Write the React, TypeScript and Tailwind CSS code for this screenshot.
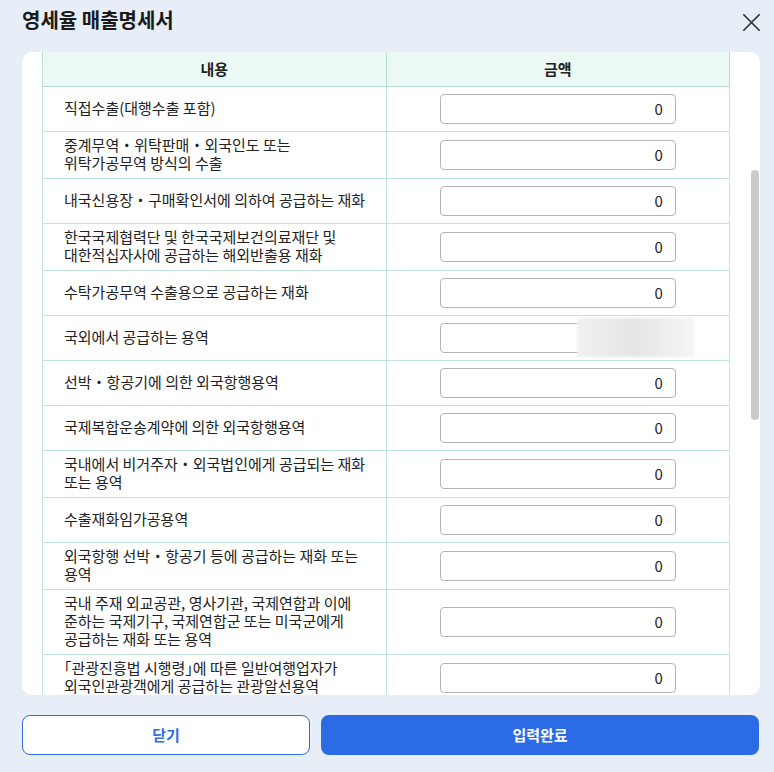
const items: string[][] = [
  ["직접수출(대행수출 포함)"],
  ["중계무역・위탁판매・외국인도 또는", "위탁가공무역 방식의 수출"],
  ["내국신용장・구매확인서에 의하여 공급하는 재화"],
  ["한국국제협력단 및 한국국제보건의료재단 및", "대한적십자사에 공급하는 해외반출용 재화"],
  ["수탁가공무역 수출용으로 공급하는 재화"],
  ["국외에서 공급하는 용역"],
  ["선박・항공기에 의한 외국항행용역"],
  ["국제복합운송계약에 의한 외국항행용역"],
  ["국내에서 비거주자・외국법인에게 공급되는 재화", "또는 용역"],
  ["수출재화임가공용역"],
  ["외국항행 선박・항공기 등에 공급하는 재화 또는", "용역"],
  [
    "국내 주재 외교공관, 영사기관, 국제연합과 이에",
    "준하는 국제기구, 국제연합군 또는 미국군에게",
    "공급하는 재화 또는 용역",
  ],
  ["「관광진흥법 시행령」에 따른 일반여행업자가", "외국인관광객에게 공급하는 관광알선용역"],
];

// 「 」 are full width in Noto CJK, use the half-width alternates like the original
function Line({ text }: { text: string }) {
  const parts = text.split(/([「」])/);
  return (
    <div>
      {parts.map((p, i) =>
        p === "「" || p === "」" ? (
          <span key={i} className="[font-feature-settings:'halt']">
            {p}
          </span>
        ) : (
          p
        )
      )}
    </div>
  );
}

function CloseIcon() {
  return (
    <svg viewBox="0 0 17 17" className="mt-[8px] h-[17px] w-[17px]" fill="none">
      <path d="M0.8 0.8L16.2 16.2M16.2 0.8L0.8 16.2" stroke="#2b2b2b" strokeWidth="1.6" strokeLinecap="round" />
    </svg>
  );
}

export default function App() {
  return (
    <div className="flex h-[772px] w-[774px] flex-col bg-[#e8eef8] pl-[22px] pr-[14px] font-['Noto_Sans_CJK_KR',sans-serif] text-[#222]">
      <header className="flex h-[52px] shrink-0 items-start justify-between pt-[6px]">
        <h2 className="text-[20px] leading-[28px] font-bold text-[#1a1a1a]">영세율 매출명세서</h2>
        <button type="button" aria-label="닫기">
          <CloseIcon />
        </button>
      </header>

      <div className="relative h-[643px] shrink-0 overflow-hidden rounded-[10px] bg-white">
        <div className="h-full overflow-y-auto pl-5 pr-[30px] [scrollbar-width:none]">
          <table className="w-full table-fixed border-collapse text-[15px] leading-[18px]">
            <thead>
              <tr className="h-[34px] bg-[#ebf8f4]">
                <th className="w-1/2 border-x border-b border-[#b7dcd6] font-bold">내용</th>
                <th className="w-1/2 border-x border-b border-[#b7dcd6] font-bold">금액</th>
              </tr>
            </thead>
            <tbody>
              {items.map((lines, i) => (
                <tr key={lines[0]}>
                  <td className="border border-t-0 border-[#c2e2dd] pt-[4px] pb-[6px] pr-5 pl-[21px] break-keep">
                    {lines.map((line) => (
                      <Line key={line} text={line} />
                    ))}
                  </td>
                  <td className="border border-t-0 border-[#c2e2dd] py-[7px]">
                    <div className="relative mx-auto w-[236px]">
                      <input
                        defaultValue="0"
                        inputMode="numeric"
                        className="h-[30px] w-full rounded-[4px] border border-[#b5b5b5] bg-white pr-3 text-right text-[15px] text-[#222] outline-none"
                      />
                      {i === 5 && (
                        <div className="absolute top-[-5px] left-[137px] h-[39px] w-[117px] bg-gradient-to-r from-[#f1f1f1] via-[#e5e5e5] to-[#f6f6f6] blur-[1px]" />
                      )}
                    </div>
                  </td>
                </tr>
              ))}
            </tbody>
          </table>
        </div>
        {/* scroll thumb */}
        <div className="absolute top-[118px] right-px h-[250px] w-[8px] rounded-full bg-[#cacaca]" />
      </div>

      <div className="mt-5 flex gap-[11px] pr-px">
        <button
          type="button"
          className="h-[40px] w-[288px] rounded-[8px] border border-[#2f6ce5] bg-white text-[15px] font-bold text-[#2f6ce5]"
        >
          닫기
        </button>
        <button
          type="button"
          className="h-[40px] flex-1 rounded-[8px] bg-[#2b6be6] text-[15px] font-bold text-white"
        >
          입력완료
        </button>
      </div>
    </div>
  );
}
